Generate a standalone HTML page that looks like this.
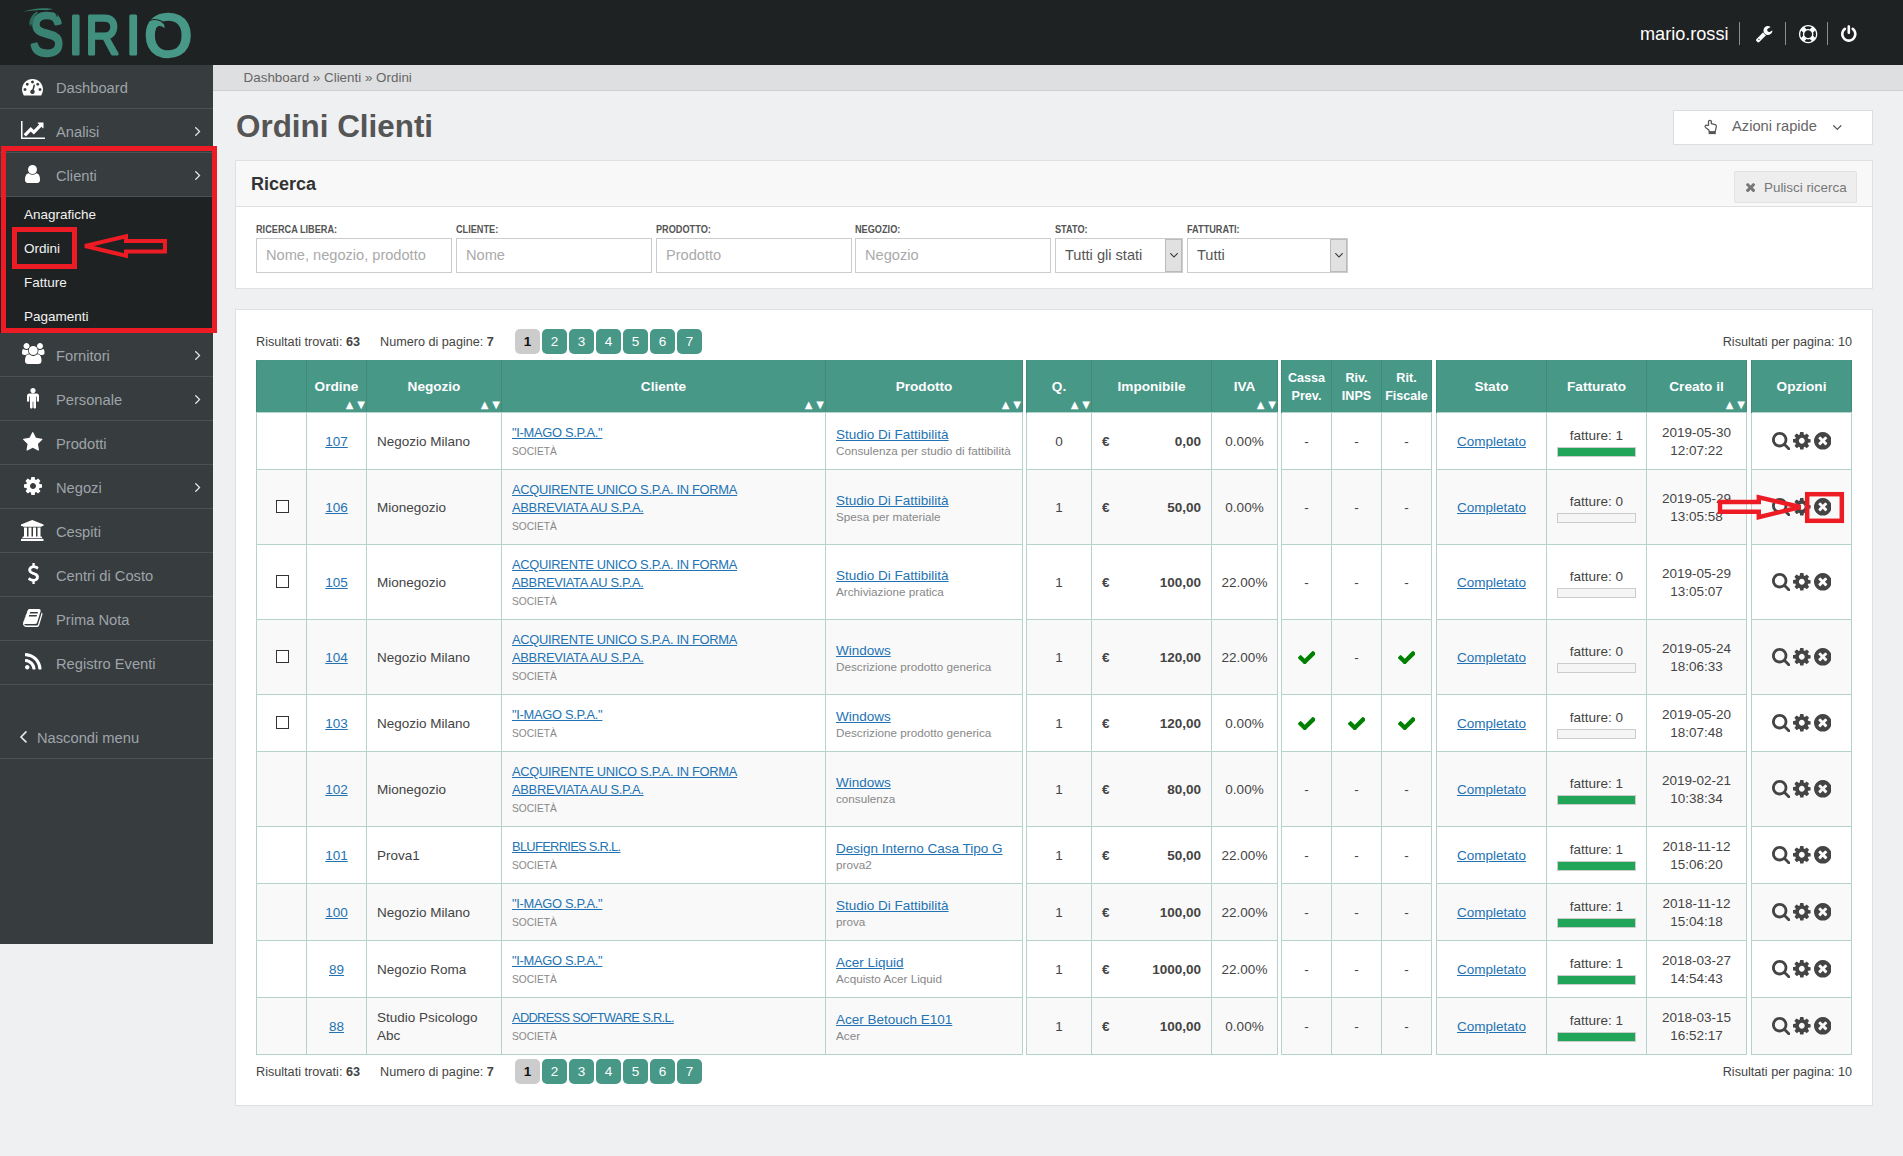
<!DOCTYPE html>
<html lang="it"><head><meta charset="utf-8"><title>Ordini Clienti - Sirio</title>
<style>
*{box-sizing:border-box}
html,body{margin:0;padding:0}
body{width:1903px;height:1156px;overflow:hidden;position:relative;background:#eff0f2;font-family:"Liberation Sans",sans-serif;font-size:13.5px;color:#444}
.ic{position:absolute;display:block;overflow:visible}
#hdr{position:absolute;left:0;top:0;width:1903px;height:65px;background:#1f2223}
.logo{position:absolute;left:0;top:0}
.user{position:absolute;left:1640px;top:22px;font-size:18.1px;line-height:24px;color:#fff;white-space:nowrap}
.sep{position:absolute;top:22px;width:1px;height:23px;background:#8a8d8e}
#side{position:absolute;left:0;top:65px;width:213px;height:879px;background:#373c3f}
.mi{position:absolute;left:0;width:213px;height:44px;border-bottom:1px solid #4b5053;color:#9ea4a9;font-size:14.7px;line-height:43px}
.mi span{position:absolute;left:56px;top:1.6px;white-space:nowrap}
.mi.hide{border-bottom:1px solid #4b5053}
.mi.hide span{left:37px}
.sub{position:absolute;left:0;width:213px;height:136px;background:#1f2223;color:#f2f2f2;font-size:13.5px}
.sub div{height:34px;line-height:34px;padding:1px 0 0 24px}
#bc{position:absolute;left:213px;top:65px;width:1690px;height:26px;background:#dedfe1;border-bottom:1px solid #cfd0d2;padding-left:30.6px;font-size:13.4px;line-height:25px;color:#666;white-space:nowrap}
h1{position:absolute;left:236px;top:108.3px;margin:0;font-size:31.4px;line-height:38px;font-weight:bold;color:#555;white-space:nowrap}
#quick{position:absolute;left:1673px;top:110px;width:200px;height:35px;background:#fff;border:1px solid #ddd}
#quick .ic{margin-left:-1674px;margin-top:-111px}
#quick span{position:absolute;left:58px;top:0;line-height:31px;font-size:14.7px;color:#666;white-space:nowrap}
#srch{position:absolute;left:235px;top:160px;width:1638px;height:129px;background:#fff;border:1px solid #dfe0e2}
.ph{position:absolute;left:0;top:0;width:1636px;height:46px;background:#f8f8f8;border-bottom:1px solid #e0e0e0}
h2{position:absolute;left:15px;top:11px;margin:0;font-size:18px;line-height:24px;color:#333;font-weight:bold}
.clr{position:absolute;left:1498px;top:10px;width:123px;height:32px;background:#eee;border:1px solid #e2e2e2;border-radius:2px;color:#777;font-size:13.4px;line-height:30px;white-space:nowrap}
.clr .x{position:absolute;left:11px;top:11px}
.clr span{position:absolute;left:29px;top:1px}
.f{position:absolute;top:62px;width:196px}
.f label{display:block;font-size:10.3px;transform:scaleX(0.89);transform-origin:0 0;font-weight:bold;color:#555;line-height:14px;height:15px;white-space:nowrap}
.in{height:35px;border:1px solid #ccc;background:#fff;color:#aaa;font-size:14.6px;line-height:33px;padding-left:9px;white-space:nowrap;overflow:hidden;position:relative}
.in.sel{color:#555}
.dd{position:absolute;right:0;top:0;width:17px;height:33px;background:#e1e1e1;border:1px solid #bbb}
.dd svg{position:absolute;left:4px;top:13px}
#res{position:absolute;left:235px;top:309px;width:1638px;height:797px;background:#fff;border:1px solid #dfe0e2}
.pgr{position:absolute;left:20px;width:1596px;height:27px;font-size:12.65px;line-height:27px;color:#444;white-space:nowrap}
.pgr span{position:absolute;top:0}
.t1{left:0}.t2{left:124px}.t3{right:0}
.btns{left:259px;top:0}
.pg{display:block;position:absolute;top:0;width:25px;height:25px;border-radius:5px;background:#489888;color:#fff;font-weight:normal;text-align:center;line-height:25px;font-size:13.5px}
.pg.cur{background:#ccc;color:#111;font-weight:bold}
.pg:nth-child(1){left:0px}
.pg:nth-child(2){left:27px}
.pg:nth-child(3){left:54px}
.pg:nth-child(4){left:81px}
.pg:nth-child(5){left:108px}
.pg:nth-child(6){left:135px}
.pg:nth-child(7){left:162px}

#tb{position:absolute;left:20px;top:50px;width:1596px;border-collapse:collapse;table-layout:fixed;font-size:13.5px;line-height:18px;color:#444}
#tb th{background:#489888;color:#fff;font-weight:bold;font-size:13.6px;height:52px;border:1px solid #3f8a7a;border-top-color:#489888;border-bottom:1px solid #b5d2cc;padding:0 2px;text-align:center;vertical-align:middle;position:relative}
#tb th.g,#tb td.g{background:#fff;border-top:0;border-bottom:0;padding:0}
#tb td{border:1px solid #b5d2cc;padding:2px 10px 0;vertical-align:middle;overflow:hidden}
#tb tr.ev td{background:#f9f9f9}
#tb tr.ev td.g{background:#fff}
#tb td.c{text-align:center;padding:2px 2px 0}
#tb a{color:#2373b4;text-decoration:underline}
#tb small{display:block;font-size:11.7px;color:#888;line-height:18px}
#tb small.u{font-size:10.2px;position:relative;top:0.8px}
#tb a.pl{position:relative;top:1.7px}
#tb a.cl{font-size:12.9px;letter-spacing:-0.3px}
#tb a.cl2{letter-spacing:-0.7px}
#tb th.n{font-size:12.6px}
.srt{position:absolute;right:1px;bottom:1px;font-family:"DejaVu Sans",sans-serif;font-size:10px;word-spacing:0.6px;line-height:12px;font-weight:normal;letter-spacing:0}
.cb{position:relative;top:-2px;display:inline-block;width:13px;height:13px;border:1px solid #333;background:#fff;vertical-align:middle;margin-left:2px}
.imp{white-space:nowrap;text-align:right}
.imp .eu{float:left}
#tb td.fat{line-height:18px}
.bar{display:block;width:79px;height:10px;border:1px solid #ccc;background:#f5f5f5;margin:2px auto 0}
.bar.on{background:#21a558}
.chk{vertical-align:middle;position:relative;top:-1px}
.ops{position:relative;top:-1px;display:inline-block;white-space:nowrap;font-size:0;vertical-align:middle}
.ops svg{margin:0 1.6px;vertical-align:middle}
#ann{position:absolute;left:0;top:0;pointer-events:none}

</style></head><body>
<div id="hdr">
<svg class="logo" width="200" height="65" viewBox="0 0 200 65" role="img" aria-label="SIRIO">
<defs><linearGradient id="lg" x1="0" y1="0" x2="1" y2="0"><stop offset="0" stop-color="#2f7a69"/><stop offset="0.5" stop-color="#43917f"/><stop offset="1" stop-color="#4a9a8a"/></linearGradient></defs>
<g font-family="Liberation Sans, sans-serif" font-size="57" stroke-width="3.2" stroke-linejoin="round"><text fill="#3a8373" stroke="#3a8373" transform="matrix(0.8861 0 0 1.0455 29.71 55.41)">S</text><text fill="#3e897a" stroke="#3e897a" transform="matrix(0.8889 0 0 0.9886 68.83 54.02)">I</text><text fill="#41907f" stroke="#41907f" transform="matrix(0.8263 0 0 0.9886 85.52 54.02)">R</text><text fill="#459484" stroke="#459484" transform="matrix(0.9111 0 0 0.9886 126.07 54.02)">I</text><text fill="#489888" stroke="#489888" transform="matrix(1.0714 0 0 1.0409 144.53 55.52)">O</text></g>
<path d="M23.4 11.7 C28 9.9 34 8.7 41.5 8.3 C46 8.1 50 8.4 53 9.3 L46 10.2 C42 9.9 39.5 10 37.5 10.3 C32 10.4 27.5 11 23.4 11.7 Z" fill="#347a69"/>
<path d="M37 11.5 C33 13.5 30.2 17.5 29.4 22.5 L29.2 26 L30.3 23.5 L30.8 27.3 L32 23.8 L32.6 26.5 L33.4 21.5 C33.9 17.5 35.3 14.5 38 12.8 Z" fill="#2d6c5d"/>
<path d="M55.2 12 L57.8 16.8 L56.2 16.2 Z" fill="#1f2223"/>
<path d="M151 21.6 C155 19.4 161 20.6 163.6 24 C164.6 25.5 164.7 27 164.3 28.2 C162.5 26.2 160 25.5 157.8 26.5 C155.8 27.5 154.6 30 154.3 33.5 L149.5 31 Z" fill="#489888"/>
<path d="M149.6 20.6 C154 18.7 160 19.4 163.4 22.5" fill="none" stroke="#1f2223" stroke-width="1.1"/>
</svg>
<div class="user">mario.rossi</div>
<i class="sep" style="left:1739px"></i><i class="sep" style="left:1785px"></i><i class="sep" style="left:1827px"></i>
<svg class="ic" style="left:1756.00px;top:25.99px;width:16.40px;height:16.42px;" viewBox="85 128 1641 1643" preserveAspectRatio="none"><path fill="#fff" d="M448 1472q0-26-19-45t-45-19-45 19-19 45 19 45 45 19 45-19 19-45zm644-420l-682 682q-37 37-90 37-52 0-91-37l-106-108q-38-36-38-90 0-53 38-91l681-681q39 98 114.500 173.500t173.500 114.500zm634-435q0 39-23 106-47 134-164.500 217.500t-258.500 83.500q-185 0-316.500-131.500t-131.500-316.500 131.500-316.500 316.500-131.500q58 0 121.500 16.500t107.500 46.500q16 11 16 28t-16 28l-293 169v224l193 107q5-3 79-48.500t135.500-81 70.500-35.500q15 0 23.500 10t8.500 25z"/></svg>
<svg class="ic" style="left:1799.15px;top:24.55px;width:18.30px;height:18.30px;" viewBox="0 0 1792 1792" preserveAspectRatio="none"><path fill="#fff" d="M896 0q182 0 348 71t286 191 191 286 71 348-71 348-191 286-286 191-348 71-348-71-286-191-191-286-71-348 71-348 191-286 286-191 348-71zm0 128q-190 0-361 90l194 194q82-28 167-28t167 28l194-194q-171-90-361-90zm-678 1129l194-194q-28-82-28-167t28-167l-194-194q-90 171-90 361t90 361zm678 407q190 0 361-90l-194-194q-82 28-167 28t-167-28l-194 194q171 90 361 90zm0-384q159 0 271.500-112.500t112.500-271.500-112.500-271.500-271.500-112.500-271.500 112.500-112.500 271.500 112.500 271.500 271.500 112.500zm484-217l194 194q90-171 90-361t-90-361l-194 194q28 82 28 167t-28 167z"/></svg>
<svg class="ic" style="left:1840.90px;top:24.85px;width:15.60px;height:16.90px;" viewBox="128 0 1536 1664" preserveAspectRatio="none"><path fill="#fff" d="M1664 896q0 156-61 298t-164 245-245 164-298 61-298-61-245-164-164-245-61-298q0-182 80.500-343t226.500-270q43-32 95.500-25t83.500 50q32 42 24.500 94.500t-49.500 84.500q-98 74-151.500 181t-53.500 228q0 104 40.500 198.500t109.500 163.500 163.500 109.500 198.500 40.500 198.500-40.500 163.500-109.500 109.500-163.500 40.500-198.500q0-121-53.500-228t-151.500-181q-42-32-49.500-84.500t24.500-94.500q31-43 84-50t95 25q146 109 226.500 270t80.500 343zm-640-768v640q0 52-38 90t-90 38-90-38-38-90v-640q0-52 38-90t90-38 90 38 38 90z"/></svg>
</div>
<div id="side">
<div class="mi" style="top:0px"><span>Dashboard</span></div>
<svg class="ic" style="left:22.25px;top:13.65px;width:21.00px;height:16.50px;" viewBox="0 256 1792 1408" preserveAspectRatio="none"><path fill="#fff" d="M384 1152q0-53-37.500-90.500t-90.500-37.500-90.500 37.500-37.500 90.500 37.500 90.500 90.500 37.500 90.500-37.500 37.500-90.500zm192-448q0-53-37.500-90.500t-90.500-37.500-90.500 37.500-37.500 90.500 37.500 90.500 90.500 37.500 90.500-37.500 37.500-90.500zm428 481l101-382q6-26-7.500-48.500t-38.500-29.500-48 6.500-30 39.500l-101 382q-60 5-107 43.500t-63 98.500q-20 77 20 146t117 89 146-20 89-117q16-60-6-117t-72-91zm660-33q0-53-37.500-90.500t-90.500-37.500-90.500 37.500-37.500 90.500 37.500 90.500 90.500 37.500 90.500-37.500 37.500-90.500zm-640-640q0-53-37.500-90.500t-90.500-37.500-90.500 37.500-37.500 90.500 37.500 90.500 90.500 37.500 90.500-37.500 37.500-90.500zm448 192q0-53-37.500-90.500t-90.500-37.500-90.500 37.500-37.500 90.500 37.500 90.500 90.500 37.500 90.500-37.500 37.500-90.500zm320 448q0 261-141 483-19 29-54 29h-1402q-35 0-54-29-141-221-141-483 0-182 71-348t191-286 286-191 348-71 348 71 286 191 191 286 71 348z"/></svg>
<div class="mi" style="top:44px"><span>Analisi</span></div>
<svg class="ic" style="left:21.00px;top:55.70px;width:24.00px;height:18.00px;" viewBox="0 128 2048 1536" preserveAspectRatio="none"><path fill="#fff" d="M2048 1536v128h-2048v-1536h128v1408h1920zm-128-1248v435q0 21-19.500 29.500t-35.500-7.500l-121-121-633 633q-10 10-23 10t-23-10l-233-233-416 416-192-192 585-585q10-10 23-10t23 10l233 233 464-464-121-121q-16-16-7.500-35.500t29.500-19.500h435q14 0 23 9t9 23z"/></svg>
<svg class="ic" style="left:194.55px;top:61.96px;width:5.30px;height:9.09px;" viewBox="13 461 582 998" preserveAspectRatio="none"><path fill="#e8e8e8" d="M595 960q0 13-10 23l-466 466q-10 10-23 10t-23-10l-50-50q-10-10-10-23t10-23l393-393-393-393q-10-10-10-23t10-23l50-50q10-10 23-10t23 10l466 466q10 10 10 23z"/></svg>
<div class="mi" style="top:88px"><span>Clienti</span></div>
<svg class="ic" style="left:25.40px;top:99.70px;width:15.00px;height:18.00px;" viewBox="256 128 1280 1536" preserveAspectRatio="none"><path fill="#fff" d="M1536 1399q0 109-62.500 187t-150.500 78h-854q-88 0-150.500-78t-62.500-187q0-85 8.500-160.500t31.500-152 58.500-131 94-89 134.500-34.500q131 128 313 128t313-128q76 0 134.500 34.500t94 89 58.500 131 31.500 152 8.500 160.500zm-256-887q0 159-112.500 271.500t-271.500 112.500-271.500-112.500-112.500-271.500 112.500-271.500 271.500-112.500 271.500 112.500 112.500 271.500z"/></svg>
<svg class="ic" style="left:194.55px;top:105.96px;width:5.30px;height:9.09px;" viewBox="13 461 582 998" preserveAspectRatio="none"><path fill="#e8e8e8" d="M595 960q0 13-10 23l-466 466q-10 10-23 10t-23-10l-50-50q-10-10-10-23t10-23l393-393-393-393q-10-10-10-23t10-23l50-50q10-10 23-10t23 10l466 466q10 10 10 23z"/></svg>
<div class="mi" style="top:268px"><span>Fornitori</span></div>
<svg class="ic" style="left:21.75px;top:278.30px;width:22.50px;height:21.00px;" viewBox="0 0 1920 1792" preserveAspectRatio="none"><path fill="#fff" d="M593 896q-162 5-265 128h-134q-82 0-138-40.500t-56-118.500q0-353 124-353 6 0 43.500 21t97.500 42.500 119 21.500q67 0 133-23-5 37-5 66 0 139 81 256zm1071 637q0 120-73 189.500t-194 69.500h-874q-121 0-194-69.500t-73-189.500q0-53 3.500-103.500t14-109 26.500-108.500 43-97.500 62-81 85.500-53.500 111.500-20q10 0 43 21.500t73 48 107 48 135 21.500 135-21.500 107-48 73-48 43-21.500q61 0 111.500 20t85.500 53.500 62 81 43 97.500 26.500 108.500 14 109 3.500 103.500zm-1024-1277q0 106-75 181t-181 75-181-75-75-181 75-181 181-75 181 75 75 181zm704 384q0 159-112.500 271.500t-271.500 112.500-271.500-112.500-112.500-271.500 112.500-271.500 271.500-112.500 271.500 112.500 112.500 271.500zm576 225q0 78-56 118.500t-138 40.500h-134q-103-123-265-128 81-117 81-256 0-29-5-66 66 23 133 23 59 0 119-21.500t97.500-42.500 43.500-21q124 0 124 353zm-128-609q0 106-75 181t-181 75-181-75-75-181 75-181 181-75 181 75 75 181z"/></svg>
<svg class="ic" style="left:194.55px;top:285.96px;width:5.30px;height:9.09px;" viewBox="13 461 582 998" preserveAspectRatio="none"><path fill="#e8e8e8" d="M595 960q0 13-10 23l-466 466q-10 10-23 10t-23-10l-50-50q-10-10-10-23t10-23l393-393-393-393q-10-10-10-23t10-23l50-50q10-10 23-10t23 10l466 466q10 10 10 23z"/></svg>
<div class="mi" style="top:312px"><span>Personale</span></div>
<svg class="ic" style="left:26.85px;top:322.69px;width:12.00px;height:20.62px;" viewBox="0 160 1024 1760" preserveAspectRatio="none"><path fill="#fff" d="M1024 832v416q0 40-28 68t-68 28-68-28-28-68v-352h-64v912q0 46-33 79t-79 33-79-33-33-79v-464h-64v464q0 46-33 79t-79 33-79-33-33-79v-912h-64v352q0 40-28 68t-68 28-68-28-28-68v-416q0-80 56-136t136-56h640q80 0 136 56t56 136zm-288-448q0 93-65.500 158.500t-158.500 65.500-158.500-65.500-65.500-158.500 65.500-158.500 158.500-65.500 158.500 65.500 65.500 158.500z"/></svg>
<svg class="ic" style="left:194.55px;top:329.96px;width:5.30px;height:9.09px;" viewBox="13 461 582 998" preserveAspectRatio="none"><path fill="#e8e8e8" d="M595 960q0 13-10 23l-466 466q-10 10-23 10t-23-10l-50-50q-10-10-10-23t10-23l393-393-393-393q-10-10-10-23t10-23l50-50q10-10 23-10t23 10l466 466q10 10 10 23z"/></svg>
<div class="mi" style="top:356px"><span>Prodotti</span></div>
<svg class="ic" style="left:22.75px;top:366.70px;width:19.50px;height:18.60px;" viewBox="64 32 1664 1587" preserveAspectRatio="none"><path fill="#fff" d="M1728 647q0 22-26 48l-363 354 86 500q1 7 1 20 0 21-10.500 35.500t-30.500 14.500q-19 0-40-12l-449-236-449 236q-22 12-40 12-21 0-31.500-14.500t-10.500-35.500q0-6 2-20l86-500-364-354q-25-27-25-48 0-37 56-46l502-73 225-455q19-41 49-41t49 41l225 455 502 73q56 9 56 46z"/></svg>
<div class="mi" style="top:400px"><span>Negozi</span></div>
<svg class="ic" style="left:23.90px;top:412.00px;width:18.00px;height:18.00px;" viewBox="128 128 1536 1536" preserveAspectRatio="none"><path fill="#fff" d="M1152 896q0-106-75-181t-181-75-181 75-75 181 75 181 181 75 181-75 75-181zm512-109v222q0 12-8 23t-20 13l-185 28q-19 54-39 91 35 50 107 138 10 12 10 25t-9 23q-27 37-99 108t-94 71q-12 0-26-9l-138-108q-44 23-91 38-16 136-29 186-7 28-36 28h-222q-14 0-24.500-8.500t-11.500-21.500l-28-184q-49-16-90-37l-141 107q-10 9-25 9-14 0-25-11-126-114-165-168-7-10-7-23 0-12 8-23 15-21 51-66.500t54-70.500q-27-50-41-99l-183-27q-13-2-21-12.500t-8-23.500v-222q0-12 8-23t19-13l186-28q14-46 39-92-40-57-107-138-10-12-10-24 0-10 9-23 26-36 98.500-107.500t94.500-71.500q13 0 26 10l138 107q44-23 91-38 16-136 29-186 7-28 36-28h222q14 0 24.500 8.500t11.500 21.500l28 184q49 16 90 37l142-107q9-9 24-9 13 0 25 10 129 119 165 170 7 8 7 22 0 12-8 23-15 21-51 66.500t-54 70.500q26 50 41 98l183 28q13 2 21 12.500t8 23.500z"/></svg>
<svg class="ic" style="left:194.55px;top:417.96px;width:5.30px;height:9.09px;" viewBox="13 461 582 998" preserveAspectRatio="none"><path fill="#e8e8e8" d="M595 960q0 13-10 23l-466 466q-10 10-23 10t-23-10l-50-50q-10-10-10-23t10-23l393-393-393-393q-10-10-10-23t10-23l50-50q10-10 23-10t23 10l466 466q10 10 10 23z"/></svg>
<div class="mi" style="top:444px"><span>Cespiti</span></div>
<svg class="ic" style="left:21.05px;top:454.50px;width:22.50px;height:21.00px;" viewBox="0 0 1920 1792" preserveAspectRatio="none"><path fill="#fff" d="M960 0l960 384v128h-128q0 26-20.500 45t-48.500 19h-1526q-28 0-48.500-19t-20.500-45h-128v-128zm-704 640h256v768h128v-768h256v768h128v-768h256v768h128v-768h256v768h59q28 0 48.500 19t20.500 45v64h-1664v-64q0-26 20.500-45t48.500-19h59v-768zm1595 960q28 0 48.500 19t20.500 45v128h-1920v-128q0-26 20.500-45t48.500-19h1782z"/></svg>
<div class="mi" style="top:488px"><span>Centri di Costo</span></div>
<svg class="ic" style="left:27.53px;top:498.20px;width:10.93px;height:21.00px;" viewBox="45.0 0 933.0 1792" preserveAspectRatio="none"><path fill="#fff" d="M978 1185q0 153-99.500 263.500t-258.500 136.500v175q0 14-9 23t-23 9h-135q-13 0-22.500-9.500t-9.500-22.500v-175q-66-9-127.500-31t-101.500-44.500-74-48-46.500-37.500-17.500-18q-17-21-2-41l103-135q7-10 23-12 15-2 24 9l2 2q113 99 243 125 37 8 74 8 81 0 142.500-43t61.500-122q0-28-15-53t-33.500-42-58.500-37.500-66-32-80-32.500q-39-16-61.500-25t-61.500-26.500-62.500-31-56.500-35.500-53.500-42.500-43.500-49-35.500-58-21-66.500-8.500-78q0-138 98-242t255-134v-180q0-13 9.500-22.500t22.500-9.500h135q14 0 23 9t9 23v176q57 6 110.500 23t87 33.500 63.500 37.500 39 29 15 14q17 18 5 38l-81 146q-8 15-23 16-14 3-27-7-3-3-14.500-12t-39-26.500-58.500-32-74.500-26-85.500-11.500q-95 0-155 43t-60 111q0 26 8.500 48t29.500 41.500 39.500 33 56 31 60.500 27 70 27.500q53 20 81 31.500t76 35 75.500 42.500 62 50 53 63.500 31.500 76.500 13 94z"/></svg>
<div class="mi" style="top:532px"><span>Prima Nota</span></div>
<svg class="ic" style="left:22.84px;top:543.90px;width:19.52px;height:18.00px;" viewBox="-0.5 128 1665.3 1536" preserveAspectRatio="none"><path fill="#fff" d="M1639 478q40 57 18 129l-275 906q-19 64-76.500 107.500t-122.500 43.500h-923q-77 0-148.500-53.500t-99.500-131.500q-24-67-2-127 0-4 3-27t4-37q1-8-3-21.500t-3-19.500q2-11 8-21t16.500-23.500 16.500-23.500q23-38 45-91.500t30-91.500q3-10 .5-30t-.5-28q3-11 17-28t17-23q21-36 42-92t25-90q1-9-2.500-32t.5-28q4-13 22-30.500t22-22.500q19-26 42.500-84.500t27.500-96.500q1-8-3-25.500t-2-26.500q2-8 9-18t18-23 17-21q8-12 16.500-30.500t15-35 16-36 19.500-32 26.500-23.500 36-11.500 47.500 5.500l-1 3q38-9 51-9h761q74 0 114 56t18 130l-274 906q-36 119-71.500 153.500t-128.500 34.500h-869q-27 0-38 15-11 16-1 43 24 70 144 70h923q29 0 56-15.500t35-41.500l300-987q7-22 5-57 38 15 59 43zm-1064 2q-4 13 2 22.500t20 9.500h608q13 0 25.500-9.500t16.500-22.500l21-64q4-13-2-22.500t-20-9.500h-608q-13 0-25.500 9.500t-16.500 22.500zm-83 256q-4 13 2 22.500t20 9.500h608q13 0 25.500-9.500t16.500-22.500l21-64q4-13-2-22.500t-20-9.500h-608q-13 0-25.500 9.500t-16.500 22.500z"/></svg>
<div class="mi" style="top:576px"><span>Registro Eventi</span></div>
<svg class="ic" style="left:24.65px;top:587.95px;width:16.50px;height:16.50px;" viewBox="0 128 1408.2 1408" preserveAspectRatio="none"><path fill="#fff" d="M384 1344q0 80-56 136t-136 56-136-56-56-136 56-136 136-56 136 56 56 136zm512 123q2 28-17 48-18 21-47 21h-135q-25 0-43-16.500t-20-41.500q-22-229-184.500-391.500t-391.500-184.500q-25-2-41.500-20t-16.500-43v-135q0-29 21-47 17-17 43-17h5q160 13 306 80.500t259 181.500q114 113 181.500 259t80.500 306zm512 2q2 27-18 47-18 20-46 20h-143q-26 0-44.500-17.500t-19.500-42.500q-12-215-101-408.500t-231.500-336-336-231.500-408.500-102q-25-1-42.500-19.500t-17.500-43.500v-143q0-28 20-46 18-18 44-18h3q262 13 501.500 120t425.500 294q187 186 294 425.500t120 501.500z"/></svg>
<div class="sub" style="top:132px"><div>Anagrafiche</div><div>Ordini</div><div>Fatture</div><div>Pagamenti</div></div>
<div class="mi hide" style="top:650px"><span>Nascondi menu</span></div>
<svg class="ic" style="left:20.35px;top:665.88px;width:6.90px;height:11.83px;" viewBox="45 461 582 998" preserveAspectRatio="none"><path fill="#e8e8e8" d="M627 544q0 13-10 23l-393 393 393 393q10 10 10 23t-10 23l-50 50q-10 10-23 10t-23-10l-466-466q-10-10-10-23t10-23l466-466q10-10 23-10t23 10l50 50q10 10 10 23z"/></svg>
</div>
<div id="bc">Dashboard » Clienti » Ordini</div>
<h1>Ordini Clienti</h1>
<div id="quick"><svg class="ic" style="left:1704px;top:119px;width:14px;height:16px" viewBox="0 0 14 16"><path fill="none" stroke="#555" stroke-width="1.25" stroke-linejoin="round" stroke-linecap="round" d="M5.2 12.1 L4.8 10.9 L1.5 8.4 C0.6 7.5 1.2 6.2 2.6 6.25 H4.5 V2.5 C4.5 1 7.36 1 7.36 2.5 V4.7 L9.2 5.1 L11.3 5.6 C12.2 5.9 12.5 6.6 12.4 7.6 L11.3 12.1"/><rect x="4.6" y="12.1" width="7.2" height="3" fill="#555"/></svg><span>Azioni rapide</span><svg class="ic" style="left:1832.70px;top:125.09px;width:8.60px;height:5.02px;" viewBox="77 653 998 582" preserveAspectRatio="none"><path fill="#555" d="M1075 736q0 13-10 23l-466 466q-10 10-23 10t-23-10l-466-466q-10-10-10-23t10-23l50-50q10-10 23-10t23 10l393 393 393-393q10-10 23-10t23 10l50 50q10 10 10 23z"/></svg></div>
<div id="srch">
 <div class="ph"><h2>Ricerca</h2><div class="clr"><svg class="x" width="9.20" height="9.20" viewBox="302 366 1188 1188"><path fill="#777" d="M1490 1322q0 40-28 68l-136 136q-28 28-68 28t-68-28l-294-294-294 294q-28 28-68 28t-68-28l-136-136q-28-28-28-68t28-68l294-294-294-294q-28-28-28-68t28-68l136-136q28-28 68-28t68 28l294 294 294-294q28-28 68-28t68 28l136 136q28 28 28 68t-28 68l-294 294 294 294q28 28 28 68z"/></svg><span>Pulisci ricerca</span></div></div>
 <div class="f" style="left:20px"><label>RICERCA LIBERA:</label><div class="in">Nome, negozio, prodotto</div></div>
 <div class="f" style="left:220px"><label>CLIENTE:</label><div class="in">Nome</div></div>
 <div class="f" style="left:420px"><label>PRODOTTO:</label><div class="in">Prodotto</div></div>
 <div class="f" style="left:619px"><label>NEGOZIO:</label><div class="in">Negozio</div></div>
 <div class="f" style="left:819px;width:127.5px"><label>STATO:</label><div class="in sel">Tutti gli stati<i class="dd"><svg class="" width="8.00" height="4.67" viewBox="77 653 998 582"><path fill="#333" d="M1075 736q0 13-10 23l-466 466q-10 10-23 10t-23-10l-466-466q-10-10-10-23t10-23l50-50q10-10 23-10t23 10l393 393 393-393q10-10 23-10t23 10l50 50q10 10 10 23z"/></svg></i></div></div>
 <div class="f" style="left:951px;width:161px"><label>FATTURATI:</label><div class="in sel">Tutti<i class="dd"><svg class="" width="8.00" height="4.67" viewBox="77 653 998 582"><path fill="#333" d="M1075 736q0 13-10 23l-466 466q-10 10-23 10t-23-10l-466-466q-10-10-10-23t10-23l50-50q10-10 23-10t23 10l393 393 393-393q10-10 23-10t23 10l50 50q10 10 10 23z"/></svg></i></div></div>
</div>
<div id="res">
<div class="pgr" style="top:19px"><span class="t1">Risultati trovati: <b>63</b></span><span class="t2">Numero di pagine: <b>7</b></span><span class="btns"><b class="pg cur">1</b><b class="pg">2</b><b class="pg">3</b><b class="pg">4</b><b class="pg">5</b><b class="pg">6</b><b class="pg">7</b></span><span class="t3">Risultati per pagina: 10</span></div>
<table id="tb"><colgroup><col style="width:50px"><col style="width:60px"><col style="width:135px"><col style="width:324px"><col style="width:197px"><col style="width:4px"><col style="width:65px"><col style="width:120px"><col style="width:66px"><col style="width:4px"><col style="width:50px"><col style="width:50px"><col style="width:50px"><col style="width:5px"><col style="width:110px"><col style="width:100px"><col style="width:100px"><col style="width:5px"><col style="width:100px"></colgroup>
<thead><tr><th></th><th>Ordine<span class="srt">▲ ▼</span></th><th>Negozio<span class="srt">▲ ▼</span></th><th>Cliente<span class="srt">▲ ▼</span></th><th>Prodotto<span class="srt">▲ ▼</span></th><th class="g"></th><th>Q.<span class="srt">▲ ▼</span></th><th>Imponibile</th><th>IVA<span class="srt">▲ ▼</span></th><th class="g"></th><th class="n">Cassa<br>Prev.</th><th class="n">Riv.<br>INPS</th><th class="n">Rit.<br>Fiscale</th><th class="g"></th><th>Stato</th><th>Fatturato</th><th>Creato il<span class="srt">▲ ▼</span></th><th class="g"></th><th>Opzioni</th></tr></thead>
<tbody>
<tr class="od" style="height:57px"><td class="c"></td><td class="c"><a>107</a></td><td>Negozio Milano</td><td><a class="cl">"I-MAGO S.P.A."</a><small class="u">SOCIETÀ</small></td><td><a class="pl">Studio Di Fattibilità</a><small>Consulenza per studio di fattibilità</small></td><td class="g"></td><td class="c">0</td><td class="imp"><b class="eu">€</b><b>0,00</b></td><td class="c">0.00%</td><td class="g"></td><td class="c">-</td><td class="c">-</td><td class="c">-</td><td class="g"></td><td class="c"><a>Completato</a></td><td class="c fat">fatture: 1<i class="bar on"></i></td><td class="c">2019-05-30<br>12:07:22</td><td class="g"></td><td class="c"><span class="ops"><svg class="" width="18.20" height="18.20" viewBox="64 128 1664 1664"><path fill="#444" d="M1216 832q0-185-131.500-316.500t-316.500-131.500-316.500 131.500-131.500 316.500 131.500 316.500 316.500 131.500 316.500-131.500 131.500-316.500zm512 832q0 52-38 90t-90 38q-54 0-90-38l-343-342q-179 124-399 124-143 0-273.500-55.500t-225-150-150-225-55.500-273.500 55.500-273.500 150-225 225-150 273.500-55.500 273.500 55.500 225 150 150 225 55.500 273.500q0 220-124 399l343 343q37 37 37 90z"/></svg><svg class="" width="17.60" height="17.60" viewBox="128 128 1536 1536"><path fill="#444" d="M1152 896q0-106-75-181t-181-75-181 75-75 181 75 181 181 75 181-75 75-181zm512-109v222q0 12-8 23t-20 13l-185 28q-19 54-39 91 35 50 107 138 10 12 10 25t-9 23q-27 37-99 108t-94 71q-12 0-26-9l-138-108q-44 23-91 38-16 136-29 186-7 28-36 28h-222q-14 0-24.500-8.500t-11.500-21.500l-28-184q-49-16-90-37l-141 107q-10 9-25 9-14 0-25-11-126-114-165-168-7-10-7-23 0-12 8-23 15-21 51-66.500t54-70.500q-27-50-41-99l-183-27q-13-2-21-12.500t-8-23.500v-222q0-12 8-23t19-13l186-28q14-46 39-92-40-57-107-138-10-12-10-24 0-10 9-23 26-36 98.500-107.500t94.500-71.500q13 0 26 10l138 107q44-23 91-38 16-136 29-186 7-28 36-28h222q14 0 24.500 8.500t11.500 21.500l28 184q49 16 90 37l142-107q9-9 24-9 13 0 25 10 129 119 165 170 7 8 7 22 0 12-8 23-15 21-51 66.500t-54 70.500q26 50 41 98l183 28q13 2 21 12.500t8 23.500z"/></svg><svg class="" width="17.60" height="17.60" viewBox="0 128 1536 1536"><path fill="#444" d="M1149 1122q0-26-19-45l-181-181 181-181q19-19 19-45 0-27-19-46l-90-90q-19-19-46-19-26 0-45 19l-181 181-181-181q-19-19-45-19-27 0-46 19l-90 90q-19 19-19 46 0 26 19 45l181 181-181 181q-19 19-19 45 0 27 19 46l90 90q19 19 46 19 26 0 45-19l181-181 181 181q19 19 45 19 27 0 46-19l90-90q19-19 19-46zm387-226q0 209-103 385.500t-279.500 279.500-385.500 103-385.500-103-279.500-279.500-103-385.500 103-385.500 279.500-279.500 385.500-103 385.500 103 279.500 279.500 103 385.500z"/></svg></span></td></tr>
<tr class="ev" style="height:75px"><td class="c"><i class=cb></i></td><td class="c"><a>106</a></td><td>Mionegozio</td><td><a class="cl">ACQUIRENTE UNICO S.P.A. IN FORMA<br>ABBREVIATA AU S.P.A.</a><small class="u">SOCIETÀ</small></td><td><a class="pl">Studio Di Fattibilità</a><small>Spesa per materiale</small></td><td class="g"></td><td class="c">1</td><td class="imp"><b class="eu">€</b><b>50,00</b></td><td class="c">0.00%</td><td class="g"></td><td class="c">-</td><td class="c">-</td><td class="c">-</td><td class="g"></td><td class="c"><a>Completato</a></td><td class="c fat">fatture: 0<i class="bar"></i></td><td class="c">2019-05-29<br>13:05:58</td><td class="g"></td><td class="c"><span class="ops"><svg class="" width="18.20" height="18.20" viewBox="64 128 1664 1664"><path fill="#444" d="M1216 832q0-185-131.500-316.500t-316.500-131.500-316.500 131.500-131.500 316.500 131.500 316.500 316.500 131.500 316.500-131.500 131.500-316.500zm512 832q0 52-38 90t-90 38q-54 0-90-38l-343-342q-179 124-399 124-143 0-273.500-55.500t-225-150-150-225-55.500-273.500 55.500-273.500 150-225 225-150 273.500-55.500 273.500 55.500 225 150 150 225 55.500 273.500q0 220-124 399l343 343q37 37 37 90z"/></svg><svg class="" width="17.60" height="17.60" viewBox="128 128 1536 1536"><path fill="#444" d="M1152 896q0-106-75-181t-181-75-181 75-75 181 75 181 181 75 181-75 75-181zm512-109v222q0 12-8 23t-20 13l-185 28q-19 54-39 91 35 50 107 138 10 12 10 25t-9 23q-27 37-99 108t-94 71q-12 0-26-9l-138-108q-44 23-91 38-16 136-29 186-7 28-36 28h-222q-14 0-24.500-8.500t-11.500-21.500l-28-184q-49-16-90-37l-141 107q-10 9-25 9-14 0-25-11-126-114-165-168-7-10-7-23 0-12 8-23 15-21 51-66.500t54-70.500q-27-50-41-99l-183-27q-13-2-21-12.500t-8-23.500v-222q0-12 8-23t19-13l186-28q14-46 39-92-40-57-107-138-10-12-10-24 0-10 9-23 26-36 98.500-107.500t94.500-71.500q13 0 26 10l138 107q44-23 91-38 16-136 29-186 7-28 36-28h222q14 0 24.500 8.500t11.500 21.500l28 184q49 16 90 37l142-107q9-9 24-9 13 0 25 10 129 119 165 170 7 8 7 22 0 12-8 23-15 21-51 66.500t-54 70.500q26 50 41 98l183 28q13 2 21 12.500t8 23.500z"/></svg><svg class="" width="17.60" height="17.60" viewBox="0 128 1536 1536"><path fill="#444" d="M1149 1122q0-26-19-45l-181-181 181-181q19-19 19-45 0-27-19-46l-90-90q-19-19-46-19-26 0-45 19l-181 181-181-181q-19-19-45-19-27 0-46 19l-90 90q-19 19-19 46 0 26 19 45l181 181-181 181q-19 19-19 45 0 27 19 46l90 90q19 19 46 19 26 0 45-19l181-181 181 181q19 19 45 19 27 0 46-19l90-90q19-19 19-46zm387-226q0 209-103 385.500t-279.500 279.500-385.500 103-385.500-103-279.500-279.500-103-385.500 103-385.500 279.500-279.500 385.500-103 385.500 103 279.500 279.500 103 385.500z"/></svg></span></td></tr>
<tr class="od" style="height:75px"><td class="c"><i class=cb></i></td><td class="c"><a>105</a></td><td>Mionegozio</td><td><a class="cl">ACQUIRENTE UNICO S.P.A. IN FORMA<br>ABBREVIATA AU S.P.A.</a><small class="u">SOCIETÀ</small></td><td><a class="pl">Studio Di Fattibilità</a><small>Archiviazione pratica</small></td><td class="g"></td><td class="c">1</td><td class="imp"><b class="eu">€</b><b>100,00</b></td><td class="c">22.00%</td><td class="g"></td><td class="c">-</td><td class="c">-</td><td class="c">-</td><td class="g"></td><td class="c"><a>Completato</a></td><td class="c fat">fatture: 0<i class="bar"></i></td><td class="c">2019-05-29<br>13:05:07</td><td class="g"></td><td class="c"><span class="ops"><svg class="" width="18.20" height="18.20" viewBox="64 128 1664 1664"><path fill="#444" d="M1216 832q0-185-131.500-316.500t-316.500-131.500-316.500 131.500-131.500 316.500 131.500 316.500 316.500 131.500 316.500-131.500 131.500-316.500zm512 832q0 52-38 90t-90 38q-54 0-90-38l-343-342q-179 124-399 124-143 0-273.500-55.500t-225-150-150-225-55.500-273.500 55.500-273.500 150-225 225-150 273.500-55.500 273.500 55.500 225 150 150 225 55.500 273.500q0 220-124 399l343 343q37 37 37 90z"/></svg><svg class="" width="17.60" height="17.60" viewBox="128 128 1536 1536"><path fill="#444" d="M1152 896q0-106-75-181t-181-75-181 75-75 181 75 181 181 75 181-75 75-181zm512-109v222q0 12-8 23t-20 13l-185 28q-19 54-39 91 35 50 107 138 10 12 10 25t-9 23q-27 37-99 108t-94 71q-12 0-26-9l-138-108q-44 23-91 38-16 136-29 186-7 28-36 28h-222q-14 0-24.500-8.500t-11.500-21.500l-28-184q-49-16-90-37l-141 107q-10 9-25 9-14 0-25-11-126-114-165-168-7-10-7-23 0-12 8-23 15-21 51-66.500t54-70.500q-27-50-41-99l-183-27q-13-2-21-12.500t-8-23.500v-222q0-12 8-23t19-13l186-28q14-46 39-92-40-57-107-138-10-12-10-24 0-10 9-23 26-36 98.500-107.500t94.500-71.500q13 0 26 10l138 107q44-23 91-38 16-136 29-186 7-28 36-28h222q14 0 24.500 8.500t11.500 21.500l28 184q49 16 90 37l142-107q9-9 24-9 13 0 25 10 129 119 165 170 7 8 7 22 0 12-8 23-15 21-51 66.500t-54 70.500q26 50 41 98l183 28q13 2 21 12.500t8 23.500z"/></svg><svg class="" width="17.60" height="17.60" viewBox="0 128 1536 1536"><path fill="#444" d="M1149 1122q0-26-19-45l-181-181 181-181q19-19 19-45 0-27-19-46l-90-90q-19-19-46-19-26 0-45 19l-181 181-181-181q-19-19-45-19-27 0-46 19l-90 90q-19 19-19 46 0 26 19 45l181 181-181 181q-19 19-19 45 0 27 19 46l90 90q19 19 46 19 26 0 45-19l181-181 181 181q19 19 45 19 27 0 46-19l90-90q19-19 19-46zm387-226q0 209-103 385.500t-279.500 279.500-385.500 103-385.500-103-279.500-279.500-103-385.500 103-385.500 279.500-279.500 385.500-103 385.500 103 279.500 279.500 103 385.500z"/></svg></span></td></tr>
<tr class="ev" style="height:75px"><td class="c"><i class=cb></i></td><td class="c"><a>104</a></td><td>Negozio Milano</td><td><a class="cl">ACQUIRENTE UNICO S.P.A. IN FORMA<br>ABBREVIATA AU S.P.A.</a><small class="u">SOCIETÀ</small></td><td><a class="pl">Windows</a><small>Descrizione prodotto generica</small></td><td class="g"></td><td class="c">1</td><td class="imp"><b class="eu">€</b><b>120,00</b></td><td class="c">22.00%</td><td class="g"></td><td class="c"><svg class="chk" width="17.60" height="13.49" viewBox="121 334 1550 1188"><path fill="#008000" d="M1671 566q0 40-28 68l-724 724-136 136q-28 28-68 28t-68-28l-136-136-362-362q-28-28-28-68t28-68l136-136q28-28 68-28t68 28l294 295 656-657q28-28 68-28t68 28l136 136q28 28 28 68z"/></svg></td><td class="c">-</td><td class="c"><svg class="chk" width="17.60" height="13.49" viewBox="121 334 1550 1188"><path fill="#008000" d="M1671 566q0 40-28 68l-724 724-136 136q-28 28-68 28t-68-28l-136-136-362-362q-28-28-28-68t28-68l136-136q28-28 68-28t68 28l294 295 656-657q28-28 68-28t68 28l136 136q28 28 28 68z"/></svg></td><td class="g"></td><td class="c"><a>Completato</a></td><td class="c fat">fatture: 0<i class="bar"></i></td><td class="c">2019-05-24<br>18:06:33</td><td class="g"></td><td class="c"><span class="ops"><svg class="" width="18.20" height="18.20" viewBox="64 128 1664 1664"><path fill="#444" d="M1216 832q0-185-131.500-316.500t-316.500-131.500-316.500 131.500-131.500 316.500 131.500 316.500 316.500 131.500 316.500-131.500 131.500-316.500zm512 832q0 52-38 90t-90 38q-54 0-90-38l-343-342q-179 124-399 124-143 0-273.500-55.500t-225-150-150-225-55.500-273.500 55.500-273.500 150-225 225-150 273.500-55.500 273.500 55.500 225 150 150 225 55.500 273.500q0 220-124 399l343 343q37 37 37 90z"/></svg><svg class="" width="17.60" height="17.60" viewBox="128 128 1536 1536"><path fill="#444" d="M1152 896q0-106-75-181t-181-75-181 75-75 181 75 181 181 75 181-75 75-181zm512-109v222q0 12-8 23t-20 13l-185 28q-19 54-39 91 35 50 107 138 10 12 10 25t-9 23q-27 37-99 108t-94 71q-12 0-26-9l-138-108q-44 23-91 38-16 136-29 186-7 28-36 28h-222q-14 0-24.500-8.500t-11.500-21.500l-28-184q-49-16-90-37l-141 107q-10 9-25 9-14 0-25-11-126-114-165-168-7-10-7-23 0-12 8-23 15-21 51-66.500t54-70.500q-27-50-41-99l-183-27q-13-2-21-12.500t-8-23.500v-222q0-12 8-23t19-13l186-28q14-46 39-92-40-57-107-138-10-12-10-24 0-10 9-23 26-36 98.500-107.500t94.500-71.500q13 0 26 10l138 107q44-23 91-38 16-136 29-186 7-28 36-28h222q14 0 24.500 8.500t11.500 21.500l28 184q49 16 90 37l142-107q9-9 24-9 13 0 25 10 129 119 165 170 7 8 7 22 0 12-8 23-15 21-51 66.500t-54 70.500q26 50 41 98l183 28q13 2 21 12.500t8 23.500z"/></svg><svg class="" width="17.60" height="17.60" viewBox="0 128 1536 1536"><path fill="#444" d="M1149 1122q0-26-19-45l-181-181 181-181q19-19 19-45 0-27-19-46l-90-90q-19-19-46-19-26 0-45 19l-181 181-181-181q-19-19-45-19-27 0-46 19l-90 90q-19 19-19 46 0 26 19 45l181 181-181 181q-19 19-19 45 0 27 19 46l90 90q19 19 46 19 26 0 45-19l181-181 181 181q19 19 45 19 27 0 46-19l90-90q19-19 19-46zm387-226q0 209-103 385.500t-279.500 279.500-385.500 103-385.500-103-279.500-279.500-103-385.500 103-385.500 279.500-279.500 385.500-103 385.500 103 279.500 279.500 103 385.500z"/></svg></span></td></tr>
<tr class="od" style="height:57px"><td class="c"><i class=cb></i></td><td class="c"><a>103</a></td><td>Negozio Milano</td><td><a class="cl">"I-MAGO S.P.A."</a><small class="u">SOCIETÀ</small></td><td><a class="pl">Windows</a><small>Descrizione prodotto generica</small></td><td class="g"></td><td class="c">1</td><td class="imp"><b class="eu">€</b><b>120,00</b></td><td class="c">0.00%</td><td class="g"></td><td class="c"><svg class="chk" width="17.60" height="13.49" viewBox="121 334 1550 1188"><path fill="#008000" d="M1671 566q0 40-28 68l-724 724-136 136q-28 28-68 28t-68-28l-136-136-362-362q-28-28-28-68t28-68l136-136q28-28 68-28t68 28l294 295 656-657q28-28 68-28t68 28l136 136q28 28 28 68z"/></svg></td><td class="c"><svg class="chk" width="17.60" height="13.49" viewBox="121 334 1550 1188"><path fill="#008000" d="M1671 566q0 40-28 68l-724 724-136 136q-28 28-68 28t-68-28l-136-136-362-362q-28-28-28-68t28-68l136-136q28-28 68-28t68 28l294 295 656-657q28-28 68-28t68 28l136 136q28 28 28 68z"/></svg></td><td class="c"><svg class="chk" width="17.60" height="13.49" viewBox="121 334 1550 1188"><path fill="#008000" d="M1671 566q0 40-28 68l-724 724-136 136q-28 28-68 28t-68-28l-136-136-362-362q-28-28-28-68t28-68l136-136q28-28 68-28t68 28l294 295 656-657q28-28 68-28t68 28l136 136q28 28 28 68z"/></svg></td><td class="g"></td><td class="c"><a>Completato</a></td><td class="c fat">fatture: 0<i class="bar"></i></td><td class="c">2019-05-20<br>18:07:48</td><td class="g"></td><td class="c"><span class="ops"><svg class="" width="18.20" height="18.20" viewBox="64 128 1664 1664"><path fill="#444" d="M1216 832q0-185-131.500-316.500t-316.500-131.500-316.500 131.500-131.500 316.500 131.500 316.500 316.500 131.500 316.500-131.500 131.500-316.500zm512 832q0 52-38 90t-90 38q-54 0-90-38l-343-342q-179 124-399 124-143 0-273.500-55.500t-225-150-150-225-55.500-273.500 55.500-273.500 150-225 225-150 273.500-55.500 273.500 55.500 225 150 150 225 55.500 273.500q0 220-124 399l343 343q37 37 37 90z"/></svg><svg class="" width="17.60" height="17.60" viewBox="128 128 1536 1536"><path fill="#444" d="M1152 896q0-106-75-181t-181-75-181 75-75 181 75 181 181 75 181-75 75-181zm512-109v222q0 12-8 23t-20 13l-185 28q-19 54-39 91 35 50 107 138 10 12 10 25t-9 23q-27 37-99 108t-94 71q-12 0-26-9l-138-108q-44 23-91 38-16 136-29 186-7 28-36 28h-222q-14 0-24.500-8.500t-11.500-21.500l-28-184q-49-16-90-37l-141 107q-10 9-25 9-14 0-25-11-126-114-165-168-7-10-7-23 0-12 8-23 15-21 51-66.500t54-70.500q-27-50-41-99l-183-27q-13-2-21-12.500t-8-23.500v-222q0-12 8-23t19-13l186-28q14-46 39-92-40-57-107-138-10-12-10-24 0-10 9-23 26-36 98.500-107.500t94.500-71.500q13 0 26 10l138 107q44-23 91-38 16-136 29-186 7-28 36-28h222q14 0 24.500 8.500t11.500 21.500l28 184q49 16 90 37l142-107q9-9 24-9 13 0 25 10 129 119 165 170 7 8 7 22 0 12-8 23-15 21-51 66.500t-54 70.500q26 50 41 98l183 28q13 2 21 12.500t8 23.500z"/></svg><svg class="" width="17.60" height="17.60" viewBox="0 128 1536 1536"><path fill="#444" d="M1149 1122q0-26-19-45l-181-181 181-181q19-19 19-45 0-27-19-46l-90-90q-19-19-46-19-26 0-45 19l-181 181-181-181q-19-19-45-19-27 0-46 19l-90 90q-19 19-19 46 0 26 19 45l181 181-181 181q-19 19-19 45 0 27 19 46l90 90q19 19 46 19 26 0 45-19l181-181 181 181q19 19 45 19 27 0 46-19l90-90q19-19 19-46zm387-226q0 209-103 385.500t-279.500 279.500-385.500 103-385.500-103-279.500-279.500-103-385.500 103-385.500 279.500-279.500 385.500-103 385.500 103 279.500 279.500 103 385.500z"/></svg></span></td></tr>
<tr class="ev" style="height:75px"><td class="c"></td><td class="c"><a>102</a></td><td>Mionegozio</td><td><a class="cl">ACQUIRENTE UNICO S.P.A. IN FORMA<br>ABBREVIATA AU S.P.A.</a><small class="u">SOCIETÀ</small></td><td><a class="pl">Windows</a><small>consulenza</small></td><td class="g"></td><td class="c">1</td><td class="imp"><b class="eu">€</b><b>80,00</b></td><td class="c">0.00%</td><td class="g"></td><td class="c">-</td><td class="c">-</td><td class="c">-</td><td class="g"></td><td class="c"><a>Completato</a></td><td class="c fat">fatture: 1<i class="bar on"></i></td><td class="c">2019-02-21<br>10:38:34</td><td class="g"></td><td class="c"><span class="ops"><svg class="" width="18.20" height="18.20" viewBox="64 128 1664 1664"><path fill="#444" d="M1216 832q0-185-131.500-316.500t-316.500-131.500-316.500 131.500-131.500 316.500 131.500 316.500 316.500 131.500 316.500-131.500 131.500-316.500zm512 832q0 52-38 90t-90 38q-54 0-90-38l-343-342q-179 124-399 124-143 0-273.500-55.500t-225-150-150-225-55.500-273.500 55.500-273.500 150-225 225-150 273.500-55.500 273.500 55.500 225 150 150 225 55.500 273.500q0 220-124 399l343 343q37 37 37 90z"/></svg><svg class="" width="17.60" height="17.60" viewBox="128 128 1536 1536"><path fill="#444" d="M1152 896q0-106-75-181t-181-75-181 75-75 181 75 181 181 75 181-75 75-181zm512-109v222q0 12-8 23t-20 13l-185 28q-19 54-39 91 35 50 107 138 10 12 10 25t-9 23q-27 37-99 108t-94 71q-12 0-26-9l-138-108q-44 23-91 38-16 136-29 186-7 28-36 28h-222q-14 0-24.500-8.500t-11.500-21.500l-28-184q-49-16-90-37l-141 107q-10 9-25 9-14 0-25-11-126-114-165-168-7-10-7-23 0-12 8-23 15-21 51-66.500t54-70.500q-27-50-41-99l-183-27q-13-2-21-12.500t-8-23.500v-222q0-12 8-23t19-13l186-28q14-46 39-92-40-57-107-138-10-12-10-24 0-10 9-23 26-36 98.500-107.500t94.500-71.500q13 0 26 10l138 107q44-23 91-38 16-136 29-186 7-28 36-28h222q14 0 24.500 8.500t11.500 21.500l28 184q49 16 90 37l142-107q9-9 24-9 13 0 25 10 129 119 165 170 7 8 7 22 0 12-8 23-15 21-51 66.500t-54 70.500q26 50 41 98l183 28q13 2 21 12.500t8 23.500z"/></svg><svg class="" width="17.60" height="17.60" viewBox="0 128 1536 1536"><path fill="#444" d="M1149 1122q0-26-19-45l-181-181 181-181q19-19 19-45 0-27-19-46l-90-90q-19-19-46-19-26 0-45 19l-181 181-181-181q-19-19-45-19-27 0-46 19l-90 90q-19 19-19 46 0 26 19 45l181 181-181 181q-19 19-19 45 0 27 19 46l90 90q19 19 46 19 26 0 45-19l181-181 181 181q19 19 45 19 27 0 46-19l90-90q19-19 19-46zm387-226q0 209-103 385.500t-279.500 279.500-385.500 103-385.500-103-279.500-279.500-103-385.500 103-385.500 279.500-279.500 385.500-103 385.500 103 279.500 279.500 103 385.500z"/></svg></span></td></tr>
<tr class="od" style="height:57px"><td class="c"></td><td class="c"><a>101</a></td><td>Prova1</td><td><a class="cl cl2">BLUFERRIES S.R.L.</a><small class="u">SOCIETÀ</small></td><td><a class="pl">Design Interno Casa Tipo G</a><small>prova2</small></td><td class="g"></td><td class="c">1</td><td class="imp"><b class="eu">€</b><b>50,00</b></td><td class="c">22.00%</td><td class="g"></td><td class="c">-</td><td class="c">-</td><td class="c">-</td><td class="g"></td><td class="c"><a>Completato</a></td><td class="c fat">fatture: 1<i class="bar on"></i></td><td class="c">2018-11-12<br>15:06:20</td><td class="g"></td><td class="c"><span class="ops"><svg class="" width="18.20" height="18.20" viewBox="64 128 1664 1664"><path fill="#444" d="M1216 832q0-185-131.500-316.500t-316.500-131.500-316.500 131.500-131.500 316.500 131.500 316.500 316.500 131.500 316.500-131.500 131.500-316.500zm512 832q0 52-38 90t-90 38q-54 0-90-38l-343-342q-179 124-399 124-143 0-273.500-55.500t-225-150-150-225-55.500-273.500 55.500-273.500 150-225 225-150 273.500-55.500 273.500 55.500 225 150 150 225 55.500 273.500q0 220-124 399l343 343q37 37 37 90z"/></svg><svg class="" width="17.60" height="17.60" viewBox="128 128 1536 1536"><path fill="#444" d="M1152 896q0-106-75-181t-181-75-181 75-75 181 75 181 181 75 181-75 75-181zm512-109v222q0 12-8 23t-20 13l-185 28q-19 54-39 91 35 50 107 138 10 12 10 25t-9 23q-27 37-99 108t-94 71q-12 0-26-9l-138-108q-44 23-91 38-16 136-29 186-7 28-36 28h-222q-14 0-24.500-8.500t-11.500-21.500l-28-184q-49-16-90-37l-141 107q-10 9-25 9-14 0-25-11-126-114-165-168-7-10-7-23 0-12 8-23 15-21 51-66.500t54-70.500q-27-50-41-99l-183-27q-13-2-21-12.500t-8-23.500v-222q0-12 8-23t19-13l186-28q14-46 39-92-40-57-107-138-10-12-10-24 0-10 9-23 26-36 98.500-107.500t94.500-71.500q13 0 26 10l138 107q44-23 91-38 16-136 29-186 7-28 36-28h222q14 0 24.500 8.500t11.500 21.500l28 184q49 16 90 37l142-107q9-9 24-9 13 0 25 10 129 119 165 170 7 8 7 22 0 12-8 23-15 21-51 66.500t-54 70.500q26 50 41 98l183 28q13 2 21 12.500t8 23.500z"/></svg><svg class="" width="17.60" height="17.60" viewBox="0 128 1536 1536"><path fill="#444" d="M1149 1122q0-26-19-45l-181-181 181-181q19-19 19-45 0-27-19-46l-90-90q-19-19-46-19-26 0-45 19l-181 181-181-181q-19-19-45-19-27 0-46 19l-90 90q-19 19-19 46 0 26 19 45l181 181-181 181q-19 19-19 45 0 27 19 46l90 90q19 19 46 19 26 0 45-19l181-181 181 181q19 19 45 19 27 0 46-19l90-90q19-19 19-46zm387-226q0 209-103 385.500t-279.500 279.500-385.500 103-385.500-103-279.500-279.500-103-385.500 103-385.500 279.500-279.500 385.500-103 385.500 103 279.500 279.500 103 385.500z"/></svg></span></td></tr>
<tr class="ev" style="height:57px"><td class="c"></td><td class="c"><a>100</a></td><td>Negozio Milano</td><td><a class="cl">"I-MAGO S.P.A."</a><small class="u">SOCIETÀ</small></td><td><a class="pl">Studio Di Fattibilità</a><small>prova</small></td><td class="g"></td><td class="c">1</td><td class="imp"><b class="eu">€</b><b>100,00</b></td><td class="c">22.00%</td><td class="g"></td><td class="c">-</td><td class="c">-</td><td class="c">-</td><td class="g"></td><td class="c"><a>Completato</a></td><td class="c fat">fatture: 1<i class="bar on"></i></td><td class="c">2018-11-12<br>15:04:18</td><td class="g"></td><td class="c"><span class="ops"><svg class="" width="18.20" height="18.20" viewBox="64 128 1664 1664"><path fill="#444" d="M1216 832q0-185-131.500-316.500t-316.500-131.500-316.500 131.500-131.500 316.500 131.500 316.500 316.500 131.500 316.500-131.500 131.500-316.500zm512 832q0 52-38 90t-90 38q-54 0-90-38l-343-342q-179 124-399 124-143 0-273.500-55.500t-225-150-150-225-55.500-273.500 55.500-273.500 150-225 225-150 273.500-55.500 273.500 55.500 225 150 150 225 55.500 273.500q0 220-124 399l343 343q37 37 37 90z"/></svg><svg class="" width="17.60" height="17.60" viewBox="128 128 1536 1536"><path fill="#444" d="M1152 896q0-106-75-181t-181-75-181 75-75 181 75 181 181 75 181-75 75-181zm512-109v222q0 12-8 23t-20 13l-185 28q-19 54-39 91 35 50 107 138 10 12 10 25t-9 23q-27 37-99 108t-94 71q-12 0-26-9l-138-108q-44 23-91 38-16 136-29 186-7 28-36 28h-222q-14 0-24.500-8.500t-11.500-21.500l-28-184q-49-16-90-37l-141 107q-10 9-25 9-14 0-25-11-126-114-165-168-7-10-7-23 0-12 8-23 15-21 51-66.500t54-70.500q-27-50-41-99l-183-27q-13-2-21-12.500t-8-23.500v-222q0-12 8-23t19-13l186-28q14-46 39-92-40-57-107-138-10-12-10-24 0-10 9-23 26-36 98.500-107.500t94.500-71.500q13 0 26 10l138 107q44-23 91-38 16-136 29-186 7-28 36-28h222q14 0 24.500 8.500t11.500 21.500l28 184q49 16 90 37l142-107q9-9 24-9 13 0 25 10 129 119 165 170 7 8 7 22 0 12-8 23-15 21-51 66.500t-54 70.500q26 50 41 98l183 28q13 2 21 12.500t8 23.500z"/></svg><svg class="" width="17.60" height="17.60" viewBox="0 128 1536 1536"><path fill="#444" d="M1149 1122q0-26-19-45l-181-181 181-181q19-19 19-45 0-27-19-46l-90-90q-19-19-46-19-26 0-45 19l-181 181-181-181q-19-19-45-19-27 0-46 19l-90 90q-19 19-19 46 0 26 19 45l181 181-181 181q-19 19-19 45 0 27 19 46l90 90q19 19 46 19 26 0 45-19l181-181 181 181q19 19 45 19 27 0 46-19l90-90q19-19 19-46zm387-226q0 209-103 385.500t-279.500 279.500-385.500 103-385.500-103-279.500-279.500-103-385.500 103-385.500 279.500-279.500 385.500-103 385.500 103 279.500 279.500 103 385.500z"/></svg></span></td></tr>
<tr class="od" style="height:57px"><td class="c"></td><td class="c"><a>89</a></td><td>Negozio Roma</td><td><a class="cl">"I-MAGO S.P.A."</a><small class="u">SOCIETÀ</small></td><td><a class="pl">Acer Liquid</a><small>Acquisto Acer Liquid</small></td><td class="g"></td><td class="c">1</td><td class="imp"><b class="eu">€</b><b>1000,00</b></td><td class="c">22.00%</td><td class="g"></td><td class="c">-</td><td class="c">-</td><td class="c">-</td><td class="g"></td><td class="c"><a>Completato</a></td><td class="c fat">fatture: 1<i class="bar on"></i></td><td class="c">2018-03-27<br>14:54:43</td><td class="g"></td><td class="c"><span class="ops"><svg class="" width="18.20" height="18.20" viewBox="64 128 1664 1664"><path fill="#444" d="M1216 832q0-185-131.500-316.500t-316.500-131.500-316.500 131.500-131.500 316.500 131.500 316.500 316.500 131.500 316.500-131.500 131.500-316.500zm512 832q0 52-38 90t-90 38q-54 0-90-38l-343-342q-179 124-399 124-143 0-273.500-55.500t-225-150-150-225-55.500-273.500 55.500-273.500 150-225 225-150 273.500-55.500 273.500 55.500 225 150 150 225 55.500 273.500q0 220-124 399l343 343q37 37 37 90z"/></svg><svg class="" width="17.60" height="17.60" viewBox="128 128 1536 1536"><path fill="#444" d="M1152 896q0-106-75-181t-181-75-181 75-75 181 75 181 181 75 181-75 75-181zm512-109v222q0 12-8 23t-20 13l-185 28q-19 54-39 91 35 50 107 138 10 12 10 25t-9 23q-27 37-99 108t-94 71q-12 0-26-9l-138-108q-44 23-91 38-16 136-29 186-7 28-36 28h-222q-14 0-24.500-8.500t-11.500-21.500l-28-184q-49-16-90-37l-141 107q-10 9-25 9-14 0-25-11-126-114-165-168-7-10-7-23 0-12 8-23 15-21 51-66.500t54-70.500q-27-50-41-99l-183-27q-13-2-21-12.500t-8-23.500v-222q0-12 8-23t19-13l186-28q14-46 39-92-40-57-107-138-10-12-10-24 0-10 9-23 26-36 98.500-107.500t94.500-71.500q13 0 26 10l138 107q44-23 91-38 16-136 29-186 7-28 36-28h222q14 0 24.500 8.500t11.500 21.500l28 184q49 16 90 37l142-107q9-9 24-9 13 0 25 10 129 119 165 170 7 8 7 22 0 12-8 23-15 21-51 66.500t-54 70.500q26 50 41 98l183 28q13 2 21 12.500t8 23.500z"/></svg><svg class="" width="17.60" height="17.60" viewBox="0 128 1536 1536"><path fill="#444" d="M1149 1122q0-26-19-45l-181-181 181-181q19-19 19-45 0-27-19-46l-90-90q-19-19-46-19-26 0-45 19l-181 181-181-181q-19-19-45-19-27 0-46 19l-90 90q-19 19-19 46 0 26 19 45l181 181-181 181q-19 19-19 45 0 27 19 46l90 90q19 19 46 19 26 0 45-19l181-181 181 181q19 19 45 19 27 0 46-19l90-90q19-19 19-46zm387-226q0 209-103 385.500t-279.500 279.500-385.500 103-385.500-103-279.500-279.500-103-385.500 103-385.500 279.500-279.500 385.500-103 385.500 103 279.500 279.500 103 385.500z"/></svg></span></td></tr>
<tr class="ev" style="height:57px"><td class="c"></td><td class="c"><a>88</a></td><td>Studio Psicologo<br>Abc</td><td><a class="cl cl2">ADDRESS SOFTWARE S.R.L.</a><small class="u">SOCIETÀ</small></td><td><a class="pl">Acer Betouch E101</a><small>Acer</small></td><td class="g"></td><td class="c">1</td><td class="imp"><b class="eu">€</b><b>100,00</b></td><td class="c">0.00%</td><td class="g"></td><td class="c">-</td><td class="c">-</td><td class="c">-</td><td class="g"></td><td class="c"><a>Completato</a></td><td class="c fat">fatture: 1<i class="bar on"></i></td><td class="c">2018-03-15<br>16:52:17</td><td class="g"></td><td class="c"><span class="ops"><svg class="" width="18.20" height="18.20" viewBox="64 128 1664 1664"><path fill="#444" d="M1216 832q0-185-131.500-316.500t-316.500-131.500-316.500 131.500-131.500 316.500 131.500 316.500 316.500 131.500 316.500-131.500 131.500-316.500zm512 832q0 52-38 90t-90 38q-54 0-90-38l-343-342q-179 124-399 124-143 0-273.500-55.500t-225-150-150-225-55.500-273.500 55.500-273.500 150-225 225-150 273.500-55.500 273.500 55.500 225 150 150 225 55.500 273.500q0 220-124 399l343 343q37 37 37 90z"/></svg><svg class="" width="17.60" height="17.60" viewBox="128 128 1536 1536"><path fill="#444" d="M1152 896q0-106-75-181t-181-75-181 75-75 181 75 181 181 75 181-75 75-181zm512-109v222q0 12-8 23t-20 13l-185 28q-19 54-39 91 35 50 107 138 10 12 10 25t-9 23q-27 37-99 108t-94 71q-12 0-26-9l-138-108q-44 23-91 38-16 136-29 186-7 28-36 28h-222q-14 0-24.500-8.500t-11.500-21.500l-28-184q-49-16-90-37l-141 107q-10 9-25 9-14 0-25-11-126-114-165-168-7-10-7-23 0-12 8-23 15-21 51-66.500t54-70.500q-27-50-41-99l-183-27q-13-2-21-12.500t-8-23.500v-222q0-12 8-23t19-13l186-28q14-46 39-92-40-57-107-138-10-12-10-24 0-10 9-23 26-36 98.500-107.500t94.500-71.500q13 0 26 10l138 107q44-23 91-38 16-136 29-186 7-28 36-28h222q14 0 24.500 8.500t11.500 21.500l28 184q49 16 90 37l142-107q9-9 24-9 13 0 25 10 129 119 165 170 7 8 7 22 0 12-8 23-15 21-51 66.500t-54 70.500q26 50 41 98l183 28q13 2 21 12.500t8 23.500z"/></svg><svg class="" width="17.60" height="17.60" viewBox="0 128 1536 1536"><path fill="#444" d="M1149 1122q0-26-19-45l-181-181 181-181q19-19 19-45 0-27-19-46l-90-90q-19-19-46-19-26 0-45 19l-181 181-181-181q-19-19-45-19-27 0-46 19l-90 90q-19 19-19 46 0 26 19 45l181 181-181 181q-19 19-19 45 0 27 19 46l90 90q19 19 46 19 26 0 45-19l181-181 181 181q19 19 45 19 27 0 46-19l90-90q19-19 19-46zm387-226q0 209-103 385.500t-279.500 279.500-385.500 103-385.500-103-279.500-279.500-103-385.500 103-385.500 279.500-279.500 385.500-103 385.500 103 279.500 279.500 103 385.500z"/></svg></span></td></tr>
</tbody></table>
<div class="pgr" style="top:749px"><span class="t1">Risultati trovati: <b>63</b></span><span class="t2">Numero di pagine: <b>7</b></span><span class="btns"><b class="pg cur">1</b><b class="pg">2</b><b class="pg">3</b><b class="pg">4</b><b class="pg">5</b><b class="pg">6</b><b class="pg">7</b></span><span class="t3">Risultati per pagina: 10</span></div>
</div>
<svg id="ann" width="1903" height="1156" viewBox="0 0 1903 1156">
<g fill="none" stroke="#ed1c24">
<rect x="3.5" y="148.5" width="211" height="182" stroke-width="5"/>
<rect x="14.5" y="229.5" width="60" height="37" stroke-width="5"/>
<path d="M85 246 L126 236.3 V241 H165 V251.5 H126 V255.8 Z" stroke-width="4" stroke-linejoin="miter"/>
<rect x="1807.2" y="494.2" width="34.6" height="26.6" stroke-width="4.5"/>
<path d="M1720 502 H1758.8 V497.3 L1800.5 507 L1758.8 517.2 V511.8 H1720 Z" stroke-width="4.4" stroke-linejoin="miter"/>
</g></svg>
</body></html>
